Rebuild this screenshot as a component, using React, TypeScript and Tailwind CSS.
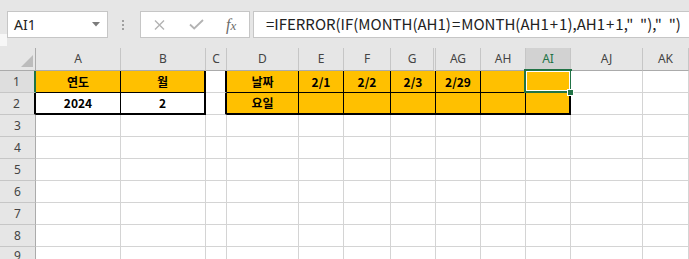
import React from "react";

type Cell = {
  text?: string;
  cls: string;
  sel?: boolean;
};

const GRID = "border-r border-b border-[#d4d4d4] bg-white";
const Y_THIN = "border-r border-b border-black bg-[#ffc000]";
const Y_BOT = "border-r border-b-2 border-black bg-[#ffc000]";
const Y_R2 = "border-r-2 border-b border-black bg-[#ffc000]";
const Y_R2B2 = "border-r-2 border-b-2 border-black bg-[#ffc000]";
const W_BOT = "border-r border-b-2 border-black bg-white";
const W_R2B2 = "border-r-2 border-b-2 border-black bg-white";
const C_CELL = "border-r-2 border-r-black border-b border-b-[#d4d4d4] bg-white";

const colHeads = ["A", "B", "C", "D", "E", "F", "G", "AG", "AH", "AI", "AJ", "AK"];

const row1: Cell[] = [
  { text: "연도", cls: Y_THIN },
  { text: "월", cls: Y_R2 },
  { cls: C_CELL },
  { text: "날짜", cls: Y_THIN },
  { text: "2/1", cls: Y_THIN },
  { text: "2/2", cls: Y_THIN },
  { text: "2/3", cls: Y_THIN },
  { text: "2/29", cls: Y_THIN },
  { cls: Y_THIN },
  { cls: Y_R2, sel: true },
  { cls: GRID },
  { cls: GRID },
];

const row2: Cell[] = [
  { text: "2024", cls: W_BOT },
  { text: "2", cls: W_R2B2 },
  { cls: C_CELL },
  { text: "요일", cls: Y_BOT },
  { cls: Y_BOT },
  { cls: Y_BOT },
  { cls: Y_BOT },
  { cls: Y_BOT },
  { cls: Y_BOT },
  { cls: Y_R2B2 },
  { cls: GRID },
  { cls: GRID },
];

function ColHeader({ label }: { label: string }) {
  if (label === "AI") {
    return (
      <div className="flex items-center justify-center border-r border-r-[#c6c6c6] border-b border-b-[#ababab] bg-[#d2d2d2] text-[#217346]">
        {label}
      </div>
    );
  }
  if (label === "G") {
    return (
      <div className="flex items-center justify-center border-r-[3px] border-double border-r-[#c6c6c6] border-b border-b-[#ababab] bg-[#e6e6e6] text-[#444]">
        {label}
      </div>
    );
  }
  return (
    <div className="flex items-center justify-center border-r border-r-[#c6c6c6] border-b border-b-[#ababab] bg-[#e6e6e6] text-[#444]">
      {label}
    </div>
  );
}

function RowHeader({ n }: { n: number }) {
  if (n === 1) {
    return (
      <div className="flex items-center justify-center border-r-2 border-r-[#217346] border-b border-b-[#c6c6c6] bg-[#dedede] pr-[1px] text-[#444]">
        {n}
      </div>
    );
  }
  if (n === 2) {
    return (
      <div className="flex items-center justify-center border-r-2 border-r-black border-b border-b-[#c6c6c6] bg-[#e6e6e6] pr-[1px] text-[#444]">
        {n}
      </div>
    );
  }
  return (
    <div className="flex items-center justify-center border-r border-r-[#ababab] border-b border-b-[#c6c6c6] bg-[#e6e6e6] text-[#444]">
      {n}
    </div>
  );
}

function DataCell({ c }: { c: Cell }) {
  return (
    <div
      className={`${c.cls} relative flex items-center justify-center font-['Noto_Sans_CJK_KR',sans-serif] text-[12px] font-bold text-black`}
    >
      {c.text}
      {c.sel && (
        <>
          <div className="pointer-events-none absolute -left-[2px] -top-[2px] -right-[3px] -bottom-[1px] border-2 border-[#217346] shadow-[inset_0_0_0_1px_#ffffff]" />
          <div className="absolute left-[41px] top-[18px] z-10 h-[7px] w-[7px] border border-white bg-[#217346]" />
        </>
      )}
    </div>
  );
}

function Op({ ch }: { ch: string }) {
  return <span className="mx-[1px]">{ch}</span>;
}

export default function App() {
  const emptyRows = [3, 4, 5, 6, 7, 8, 9];
  return (
    <div className="h-[259px] w-[689px] overflow-hidden bg-white font-['Noto_Sans',sans-serif]">
      {/* formula bar area */}
      <div className="flex h-[48px] items-start bg-[#e6e6e6]">
        <div className="mt-[34px] h-[12px] w-[7px] bg-[#f7f7f7]" />
        <div className="mt-[11px] flex h-[27px] w-[101px] items-center justify-between border border-[#c6c6c6] bg-white pl-[6px] pr-[7px]">
          <span className="text-[14px] text-[#222]">AI1</span>
          <svg width="8" height="5" viewBox="0 0 8 5">
            <path d="M0 0 L8 0 L4 4.5 Z" fill="#7b7b7b" />
          </svg>
        </div>
        <div className="mt-[20px] ml-[14px] flex flex-col gap-[2px]">
          <div className="h-[2px] w-[2px] bg-[#a0a0a0]" />
          <div className="h-[2px] w-[2px] bg-[#a0a0a0]" />
          <div className="h-[2px] w-[2px] bg-[#a0a0a0]" />
        </div>
        <div className="mt-[11px] ml-[16px] flex h-[27px] w-[110px] items-center border border-[#c6c6c6] bg-white">
          <svg className="ml-[13px]" width="11" height="10" viewBox="0 0 11 10">
            <path d="M1 0.5 L10 9.5 M10 0.5 L1 9.5" stroke="#b3b3b3" strokeWidth="1.4" />
          </svg>
          <svg className="ml-[24px]" width="15" height="11" viewBox="0 0 15 11">
            <path d="M1 5.5 L5.2 9.5 L14 1" stroke="#b3b3b3" strokeWidth="1.8" fill="none" />
          </svg>
          <span className="ml-[22px] font-['Liberation_Serif',serif] text-[16px] italic text-[#6b6b6b]">
            f<span className="text-[13px]">x</span>
          </span>
        </div>
        <div className="mt-[11px] ml-[3px] flex h-[27px] flex-1 items-center border-y border-l border-[#c6c6c6] bg-white pl-[12px]">
          <span className="whitespace-pre font-['Noto_Sans_CJK_KR',sans-serif] text-[15px] text-[#222]">
            {"="}
            {"IFERROR(IF(MONTH(AH1)"}
            <Op ch="=" />
            {"MONTH(AH1"}
            <Op ch="+" />
            {"1),AH1"}
            <Op ch="+" />
            {'1,"  "),"  ")'}
          </span>
        </div>
      </div>

      {/* sheet grid */}
      <div className="grid grid-cols-[36px_85px_85px_21px_72px_45px_47px_45px_45px_45px_45px_72px_1fr] grid-rows-[23px_22px_22px_22px_22px_22px_22px_22px_22px] text-[12px]">
        {/* corner */}
        <div className="flex items-end justify-end border-r border-r-[#ababab] border-b border-b-[#ababab] bg-[#e6e6e6] pb-[3px] pr-[2px]">
          <svg width="12" height="12" viewBox="0 0 12 12">
            <path d="M12 0 L12 12 L0 12 Z" fill="#bcbcbc" />
          </svg>
        </div>
        {colHeads.map((h) => (
          <ColHeader key={h} label={h} />
        ))}

        <RowHeader n={1} />
        {row1.map((c, i) => (
          <DataCell key={`r1-${i}`} c={c} />
        ))}

        <RowHeader n={2} />
        {row2.map((c, i) => (
          <DataCell key={`r2-${i}`} c={c} />
        ))}

        {emptyRows.map((r) => (
          <React.Fragment key={r}>
            <RowHeader n={r} />
            {colHeads.map((h) => (
              <div key={`${r}-${h}`} className={GRID} />
            ))}
          </React.Fragment>
        ))}
      </div>
    </div>
  );
}
